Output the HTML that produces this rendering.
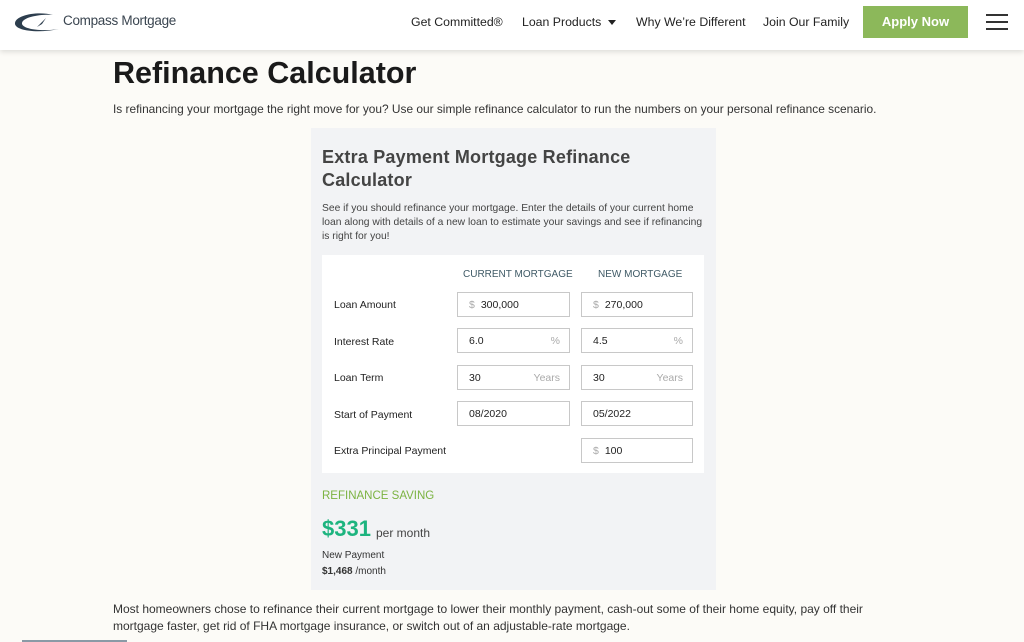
<!DOCTYPE html>
<html><head><meta charset="utf-8"><style>
*{margin:0;padding:0;box-sizing:border-box}
body{width:1024px;height:642px;overflow:hidden;background:#fcfbf7;font-family:"Liberation Sans",sans-serif;color:#333;position:relative}
.a{position:absolute;white-space:nowrap}
.hdr{position:absolute;left:0;top:0;width:1024px;height:50px;background:#fff;box-shadow:0 2px 5px rgba(0,0,0,.12)}
.nav{font-size:12.3px;color:#222;top:15px}
.btn{left:863px;top:6px;width:105px;height:32px;background:#8cb85a;color:#fff;font-weight:bold;font-size:13px;text-align:center;line-height:32px}
.hb{left:986px;width:22px;height:2px;background:#333}
.box{left:311px;top:128px;width:405px;height:462px;background:#f2f3f5}
.pan{left:322px;top:255px;width:382px;height:218px;background:#fff}
.lbl{font-size:10.5px;color:#222;left:334px}
.inp{width:113px;height:25px;border:1px solid #c8c8c8;background:#fff;font-size:10.5px;color:#222;line-height:25px;padding-left:11px}
.inp .s{color:#aaa;margin-right:6px}
.inp .r{position:absolute;right:9px;color:#aaa}
.ch{font-size:10px;color:#3f5a66;top:269px}
</style></head><body>
<div class="hdr"></div>
<svg class="a" style="left:13px;top:12px" width="52" height="22" viewBox="0 0 52 22"><path d="M40 3 C25 -1 3 3 2 11 C1 18 22 22 46 17 C28 20 8 17 9 11 C10 5 28 2 40 3Z" fill="#2d3e4e"/><path d="M24 15 L33 6 L29 12Z" fill="#2d3e4e"/></svg>
<div class="a" style="left:63px;top:13px;font-size:13.5px;color:#3a4550;letter-spacing:-0.3px">Compass Mortgage</div>
<div class="a nav" style="left:411px">Get Committed®</div>
<div class="a nav" style="left:522px">Loan Products</div>
<div class="a" style="left:608px;top:20px;width:0;height:0;border-left:4px solid transparent;border-right:4px solid transparent;border-top:5px solid #222"></div>
<div class="a nav" style="left:636px">Why We’re Different</div>
<div class="a nav" style="left:763px">Join Our Family</div>
<div class="a btn">Apply Now</div>
<div class="a hb" style="top:14px"></div><div class="a hb" style="top:21px"></div><div class="a hb" style="top:28px"></div>
<div class="a" style="left:113px;top:56px;font-size:30.5px;font-weight:bold;color:#1a1a1a">Refinance Calculator</div>
<div class="a" style="left:113px;top:102px;font-size:11.9px;color:#333">Is refinancing your mortgage the right move for you? Use our simple refinance calculator to run the numbers on your personal refinance scenario.</div>
<div class="a box"></div>
<div class="a" style="left:322px;top:146px;font-size:18px;font-weight:bold;color:#444;line-height:23px;letter-spacing:0.2px">Extra Payment Mortgage Refinance<br>Calculator</div>
<div class="a" style="left:322px;top:202px;font-size:10.3px;color:#444;line-height:14px">See if you should refinance your mortgage. Enter the details of your current home<br>loan along with details of a new loan to estimate your savings and see if refinancing<br>is right for you!</div>
<div class="a pan"></div>
<div class="a ch" style="left:463px">CURRENT MORTGAGE</div>
<div class="a ch" style="left:598px">NEW MORTGAGE</div>
<div class="a lbl" style="top:299px">Loan Amount</div>
<div class="a lbl" style="top:336px">Interest Rate</div>
<div class="a lbl" style="top:372px">Loan Term</div>
<div class="a lbl" style="top:409px">Start of Payment</div>
<div class="a lbl" style="top:445px">Extra Principal Payment</div>
<div class="a inp" style="left:457px;top:292px"><span class="s">$</span>300,000</div>
<div class="a inp" style="left:581px;top:292px;width:112px"><span class="s">$</span>270,000</div>
<div class="a inp" style="left:457px;top:328px">6.0<span class="r">%</span></div>
<div class="a inp" style="left:581px;top:328px;width:112px">4.5<span class="r">%</span></div>
<div class="a inp" style="left:457px;top:365px">30<span class="r">Years</span></div>
<div class="a inp" style="left:581px;top:365px;width:112px">30<span class="r">Years</span></div>
<div class="a inp" style="left:457px;top:401px">08/2020</div>
<div class="a inp" style="left:581px;top:401px;width:112px">05/2022</div>
<div class="a inp" style="left:581px;top:438px;width:112px"><span class="s">$</span>100</div>
<div class="a" style="left:322px;top:490px;font-size:11.5px;color:#7cb342">REFINANCE SAVING</div>
<div class="a" style="left:322px;top:516px;font-size:22px;font-weight:bold;color:#1db47f">$331</div>
<div class="a" style="left:376px;top:526px;font-size:12px;color:#444">per month</div>
<div class="a" style="left:322px;top:550px;font-size:10px;color:#333">New Payment</div>
<div class="a" style="left:322px;top:566px;font-size:10px;color:#333"><b>$1,468</b> /month</div>
<div class="a" style="left:113px;top:601px;font-size:12px;color:#333;line-height:17px">Most homeowners chose to refinance their current mortgage to lower their monthly payment, cash-out some of their home equity, pay off their<br>mortgage faster, get rid of FHA mortgage insurance, or switch out of an adjustable-rate mortgage.</div>
<div class="a" style="left:22px;top:640px;width:105px;height:2px;background:#8a9aa6"></div>
</body></html>
